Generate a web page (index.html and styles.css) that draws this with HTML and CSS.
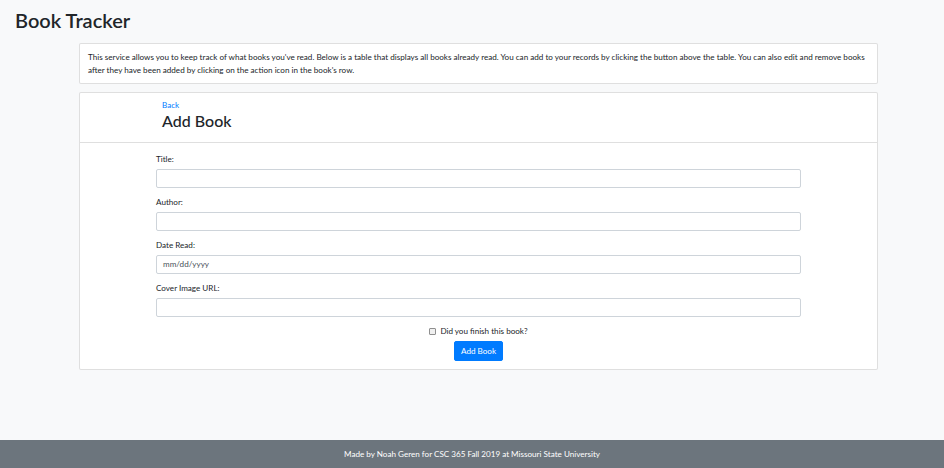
FILE: index.html
```html
<!DOCTYPE html>
<html lang="en">
<head>
<meta charset="utf-8">
<title>Book Tracker</title>
<link rel="stylesheet" href="styles.css">
</head>
<body>
<header class="top">
  <h1 class="brand">Book Tracker</h1>
</header>
<main class="main">
  <div class="card info">
    <p>This service allows you to keep track of what books you've read. Below is a table that displays all books already read. You can add to your records by clicking the button above the table. You can also edit and remove books after they have been added by clicking on the action icon in the book's row.</p>
  </div>
  <div class="card">
    <div class="card-header">
      <a class="back" href="#">Back</a>
      <h2 class="page-title">Add Book</h2>
    </div>
    <form class="form">
      <div class="group">
        <label class="label" for="title">Title:</label>
        <input class="control" id="title" type="text">
      </div>
      <div class="group">
        <label class="label" for="author">Author:</label>
        <input class="control" id="author" type="text">
      </div>
      <div class="group">
        <label class="label" for="date">Date Read:</label>
        <div class="control date">mm/dd/yyyy</div>
      </div>
      <div class="group">
        <label class="label" for="cover">Cover Image URL:</label>
        <input class="control" id="cover" type="text">
      </div>
      <div class="check">
        <span class="checkbox"></span>
        <label for="finished">Did you finish this book?</label>
      </div>
      <div class="actions">
        <button class="btn" type="button">Add Book</button>
      </div>
    </form>
  </div>
</main>
<footer class="footer">Made by Noah Geren for CSC 365 Fall 2019 at Missouri State University</footer>
</body>
</html>
```
FILE: styles.css
```css
* { box-sizing: border-box; }
html, body { height: 100%; }
body {
  margin: 0;
  background: #f8f9fa;
  font-family: "Lato", "Open Sans", sans-serif;
  font-size: 8.1px;
  line-height: 1.5;
  color: #212529;
  display: flex;
  flex-direction: column;
}
.top { padding: 8px 15px 0; }
.brand {
  margin: 0;
  font-size: 20px;
  font-weight: 600;
  line-height: 24px;
}
.main {
  flex: 1;
  width: 799px;
  margin: 11px 0 0 79px;
  display: flex;
  flex-direction: column;
  gap: 8px;
}
.card {
  background: #fff;
  border: 1px solid rgba(0,0,0,.125);
  border-radius: 2px;
}
.info { padding: 7px 8px 6px; }
.info p { margin: 0; line-height: 13px; }
.card-header {
  padding: 6px 82px 11px;
  border-bottom: 1px solid rgba(0,0,0,.125);
}
.back { color: #007bff; text-decoration: none; display: block; line-height: 12px; }
.page-title {
  margin: 0;
  font-size: 16px;
  font-weight: 500;
  line-height: 20px;
}
.form { width: 645px; margin: 0 auto; padding: 10px 0 8px; }
.group { margin-bottom: 8px; }
.label { display: block; margin-bottom: 4px; line-height: 12px; }
.control {
  display: block;
  width: 100%;
  height: 19px;
  padding: 0 6px;
  border: 1px solid #ced4da;
  border-radius: 2px;
  background: #fff;
  font: inherit;
  color: #495057;
}
.date { line-height: 17px; }
.check {
  display: flex;
  justify-content: center;
  align-items: center;
  gap: 4px;
  line-height: 12px;
}
.checkbox {
  width: 7px;
  height: 7px;
  border: 1px solid #8f8f8f;
  border-radius: 1px;
  background: #f0f0f0;
}
.actions { display: flex; justify-content: center; margin-top: 4px; }
.btn {
  font: inherit;
  color: #fff;
  background: #007bff;
  border: 1px solid #007bff;
  border-radius: 2px;
  padding: 3px 6px;
  line-height: 12px;
}
.footer {
  margin-top: 40px;
  height: 28px;
  flex-shrink: 0;
  background: #6c757d;
  color: #fff;
  text-align: center;
  line-height: 28px;
}
```
